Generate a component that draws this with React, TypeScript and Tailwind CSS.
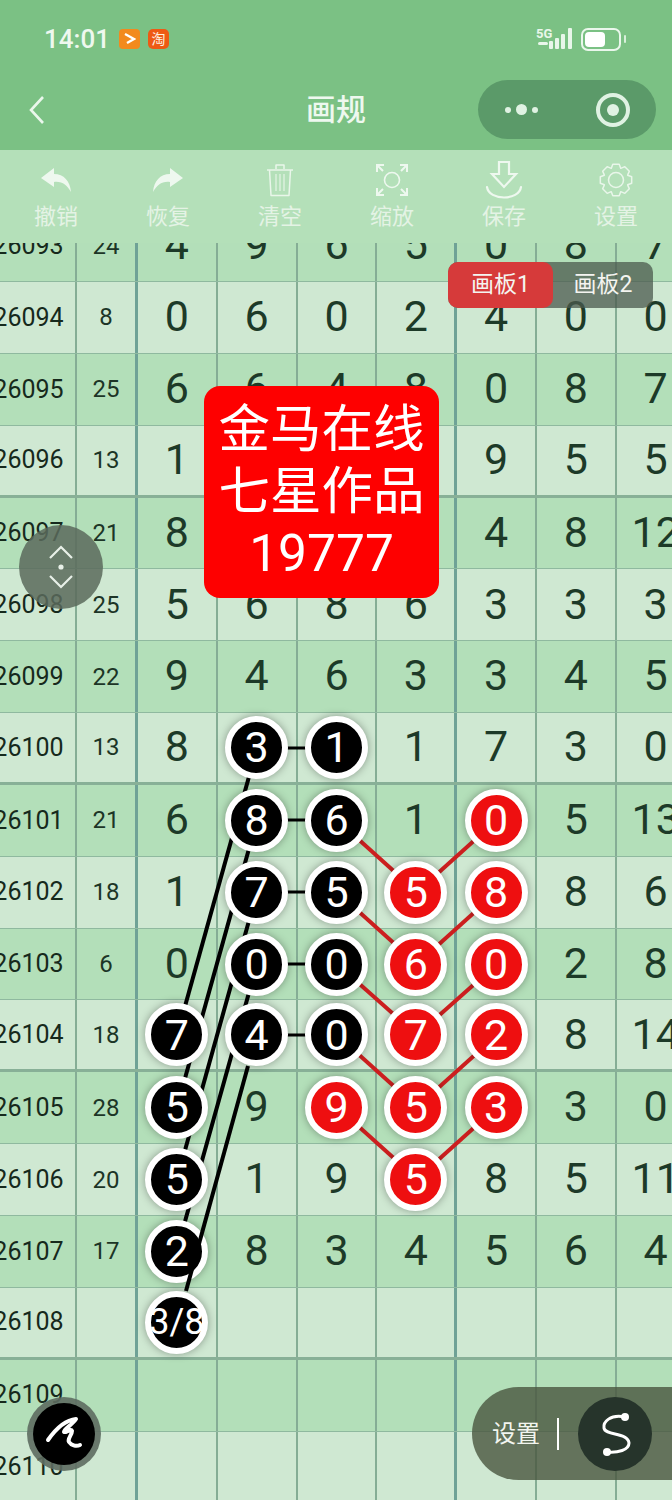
import React from "react";

type Cell = string | { b: string } | { r: string };

const rows: { id: string; n: string; c: Cell[] }[] = [
  { id: "26093", n: "24", c: ["4", "9", "6", "5", "0", "8", "7"] },
  { id: "26094", n: "8", c: ["0", "6", "0", "2", "4", "0", "0"] },
  { id: "26095", n: "25", c: ["6", "6", "4", "8", "0", "8", "7"] },
  { id: "26096", n: "13", c: ["1", "", "", "", "9", "5", "5"] },
  { id: "26097", n: "21", c: ["8", "", "", "", "4", "8", "12"] },
  { id: "26098", n: "25", c: ["5", "6", "8", "6", "3", "3", "3"] },
  { id: "26099", n: "22", c: ["9", "4", "6", "3", "3", "4", "5"] },
  { id: "26100", n: "13", c: ["8", { b: "3" }, { b: "1" }, "1", "7", "3", "0"] },
  { id: "26101", n: "21", c: ["6", { b: "8" }, { b: "6" }, "1", { r: "0" }, "5", "13"] },
  { id: "26102", n: "18", c: ["1", { b: "7" }, { b: "5" }, { r: "5" }, { r: "8" }, "8", "6"] },
  { id: "26103", n: "6", c: ["0", { b: "0" }, { b: "0" }, { r: "6" }, { r: "0" }, "2", "8"] },
  { id: "26104", n: "18", c: [{ b: "7" }, { b: "4" }, { b: "0" }, { r: "7" }, { r: "2" }, "8", "14"] },
  { id: "26105", n: "28", c: [{ b: "5" }, "9", { r: "9" }, { r: "5" }, { r: "3" }, "3", "0"] },
  { id: "26106", n: "20", c: [{ b: "5" }, "1", "9", { r: "5" }, "8", "5", "11"] },
  { id: "26107", n: "17", c: [{ b: "2" }, "8", "3", "4", "5", "6", "4"] },
  { id: "26108", n: "", c: [{ b: "3/8" }, "", "", "", "", "", ""] },
  { id: "26109", n: "", c: ["", "", "", "", "", "", ""] },
  { id: "26110", n: "", c: ["", "", "", "", "", "", ""] },
];

const redPairs = [
  [820, 892],
  [892, 964],
  [964, 1035],
  [1035, 1107],
  [1107, 1179],
];

const blackPairs = [
  [748, 1035],
  [820, 1107],
  [892, 1179],
  [964, 1250],
];

function gearPath() {
  const pts: string[] = [];
  for (let i = 0; i < 8; i++) {
    const a = (i * Math.PI) / 4;
    const spots: [number, number][] = [
      [12.6, a - 0.39],
      [16, a - 0.2],
      [16, a + 0.2],
      [12.6, a + 0.39],
    ];
    for (const [r, t] of spots) {
      pts.push(`${(17 + r * Math.sin(t)).toFixed(2)} ${(17 - r * Math.cos(t)).toFixed(2)}`);
    }
  }
  return `M${pts.join(" L")} Z`;
}

function Dot({ label, red }: { label: string; red?: boolean }) {
  return (
    <div
      className={`relative z-20 flex h-[63px] w-[63px] shrink-0 items-center justify-center overflow-visible rounded-full border-[6px] border-white text-white shadow-[0_0_9px_rgba(0,0,0,0.35)] ${
        red ? "bg-[#ee0f10]" : "bg-black"
      } ${label.length > 1 ? "text-[36px]" : "text-[43px]"}`}
    >
      {label}
    </div>
  );
}

function Tool({ label, children }: { label: string; children: React.ReactNode }) {
  return (
    <div className="flex flex-col items-center">
      <div className="flex h-[38px] items-center justify-center">{children}</div>
      <div className="mt-[3px] text-[22px] leading-[30px] text-[#e4f3e5]">{label}</div>
    </div>
  );
}

export default function App() {
  return (
    <div
      className="relative h-[1500px] w-[672px] overflow-hidden bg-[#cfe8d2]"
      style={{ fontFamily: 'Roboto, "Noto Sans CJK SC", sans-serif' }}
    >
      {/* Header */}
      <div className="h-[150px] bg-[#7bc184]">
        <div className="flex h-[78px] items-center justify-between pl-[44px] pr-[46px]">
          <div className="flex items-center">
            <span className="text-[26px] font-medium leading-none text-[#eef8ef]">14:01</span>
            <span className="ml-[9px] flex h-[20px] w-[21px] items-center justify-center rounded-[4px] bg-[#f28a1e]">
              <svg width="13" height="14" viewBox="0 0 13 14" fill="none" stroke="#fff" strokeWidth="2.4">
                <path d="M2 2 L11 7 L4 11" />
              </svg>
            </span>
            <span className="ml-[8px] flex h-[20px] w-[21px] items-center justify-center rounded-[5px] bg-[#ee5a14] text-[14px] leading-none text-[#fff3e0]">
              淘
            </span>
          </div>
          <div className="flex items-center">
            <svg width="40" height="24" viewBox="0 0 40 24" fill="#e8f6ea">
              <text x="0" y="11" fontSize="13" fontWeight="700" fill="#e8f6ea">5G</text>
              <rect x="2" y="15" width="10" height="3" rx="1.5" />
              <rect x="13" y="14" width="4" height="8" rx="1" />
              <rect x="19" y="11" width="4" height="11" rx="1" />
              <rect x="25" y="7" width="4" height="15" rx="1" />
              <rect x="32" y="1" width="4" height="21" rx="1" />
            </svg>
            <div className="ml-[5px] flex h-[23px] w-[40px] items-center rounded-[7px] border-2 border-[#eaf7ec] p-[2px]">
              <div className="h-full w-[20px] rounded-[4px] bg-white" />
            </div>
            <div className="ml-[3px] h-[8px] w-[2px] rounded-full bg-[#d8efdb]" />
          </div>
        </div>
        <div className="mt-[2px] grid h-[70px] grid-cols-[1fr_auto_1fr] items-start">
          <div className="flex h-[59px] items-center pl-[28px]">
            <svg width="17" height="30" viewBox="0 0 17 30" fill="none" stroke="#eaf7ec" strokeWidth="2.6">
              <path d="M15 2 L3 15 L15 28" />
            </svg>
          </div>
          <div className="flex h-[59px] items-center text-[30px] font-medium text-[#eef8ef]">画规</div>
          <div className="flex justify-end pr-[16px]">
            <div className="flex h-[59px] w-[178px] items-center rounded-full bg-[#5b9a69]">
              <div className="flex flex-1 items-center justify-center gap-[5px]">
                <span className="h-[6px] w-[6px] rounded-full bg-[#e0f2e3]" />
                <span className="h-[11px] w-[11px] rounded-full bg-[#e0f2e3]" />
                <span className="h-[6px] w-[6px] rounded-full bg-[#e0f2e3]" />
              </div>
              <div className="flex flex-1 items-center justify-center pl-[4px]">
                <div className="flex h-[34px] w-[34px] items-center justify-center rounded-full border-[4px] border-[#e0f2e3]">
                  <span className="h-[12px] w-[12px] rounded-full bg-[#e0f2e3]" />
                </div>
              </div>
            </div>
          </div>
        </div>
      </div>

      {/* Toolbar */}
      <div className="grid h-[93px] grid-cols-6 bg-[#b4e0b9] pt-[11px]">
        <Tool label="撤销">
          <svg width="32" height="26" viewBox="0 0 32 26" fill="#eef8ef">
            <path d="M14 1 L1 11 L14 20 V15 C22 14 27 18 31 25 C30 14 24 7 14 7 Z" />
          </svg>
        </Tool>
        <Tool label="恢复">
          <svg width="32" height="26" viewBox="0 0 32 26" fill="#eef8ef">
            <path d="M18 1 L31 11 L18 20 V15 C10 14 5 18 1 25 C2 14 8 7 18 7 Z" />
          </svg>
        </Tool>
        <Tool label="清空">
          <svg width="28" height="34" viewBox="0 0 28 34" fill="none" stroke="#e9f6ea" strokeWidth="1.5" strokeLinejoin="round">
            <path d="M10 6 V2 H18 V6" />
            <path d="M1 7 H27" />
            <path d="M3.5 7 L5 32.5 H23 L24.5 7" />
            <path d="M10 11 V28 M14 11 V28 M18 11 V28" strokeWidth="1.1" />
          </svg>
        </Tool>
        <Tool label="缩放">
          <svg width="34" height="34" viewBox="0 0 34 34" fill="none" stroke="#eef8ef" strokeWidth="2">
            <path d="M2 9 V2 H9 M2 2 L8 8 M25 2 H32 V9 M32 2 L26 8 M2 25 V32 H9 M2 32 L8 26 M25 32 H32 V25 M32 32 L26 26" />
            <circle cx="17" cy="17" r="7.5" strokeWidth="1.6" />
          </svg>
        </Tool>
        <Tool label="保存">
          <svg width="40" height="38" viewBox="0 0 40 38" fill="none" stroke="#eef8ef" strokeWidth="2.2">
            <path d="M15 1 H25 V13 H32 L20 26 L8 13 H15 Z" />
            <path d="M3 26 C5 40 35 40 37 26" strokeLinecap="round" />
          </svg>
        </Tool>
        <Tool label="设置">
          <svg width="34" height="34" viewBox="0 0 34 34" fill="none" stroke="#e9f6ea" strokeWidth="1.5" strokeLinejoin="round">
            <path d={gearPath()} />
            <circle cx="17" cy="17" r="7.5" />
          </svg>
        </Tool>
      </div>

      {/* Table */}
      <div className="relative h-[1257px] overflow-hidden">
        <div className="mt-[-32.85px] ml-[-16px] w-[760px]">
          {rows.map((r, i) => (
            <div
              key={r.id}
              className={`flex h-[71.85px] items-stretch ${i % 2 === 0 ? "bg-[#b3dfb9]" : "bg-[#cfe8d2]"} ${
                i % 4 === 3 ? "border-b-[3px] border-[#88b097]" : "border-b border-[#8fb99f]"
              }`}
            >
              <div className="flex w-[93px] items-center justify-center border-r-2 border-[#85ad95] pr-[2px] text-[25px] text-[#16291c]">
                {r.id}
              </div>
              <div className="flex w-[61px] items-center justify-center border-r-[3px] border-[#6fa296] text-[24px] text-[#1c3526]">
                {r.n}
              </div>
              {r.c.map((c, j) => (
                <div
                  key={j}
                  className={`flex w-[79.8px] items-center justify-center text-[43px] text-[#1d3a28] ${
                    j === 3 ? "border-r-[3px] border-[#6fa296]" : "border-r-2 border-[#85ad95]"
                  }`}
                >
                  {typeof c === "string" ? (
                    <span className="mb-[2px]">{c}</span>
                  ) : "b" in c ? (
                    <Dot label={c.b} />
                  ) : (
                    <Dot label={c.r} red />
                  )}
                </div>
              ))}
            </div>
          ))}
        </div>

        {/* Connectors under the nodes */}
        <svg className="absolute left-0 top-[-243px] z-10" width="672" height="1500" viewBox="0 0 672 1500">
          {blackPairs.map(([a, b]) => (
            <line key={a} x1="257" y1={a} x2="177" y2={b} stroke="#000" strokeWidth="4" />
          ))}
          {[748, 820, 892, 964, 1035].map((y) => (
            <line key={y} x1="285" y1={y} x2="310" y2={y} stroke="#000" strokeWidth="3" />
          ))}
          {redPairs.map(([a, b]) => (
            <g key={a} stroke="#cc1f1f" strokeWidth="4">
              <line x1="337" y1={a} x2="417" y2={b} />
              <line x1="497" y1={a} x2="417" y2={b} />
            </g>
          ))}
        </svg>
        {/* Last stroke runs over the earlier nodes */}
        <svg className="pointer-events-none absolute left-0 top-[-243px] z-30" width="672" height="1500" viewBox="0 0 672 1500">
          <line x1="248" y1="1066" x2="186" y2="1291" stroke="#000" strokeWidth="4" />
        </svg>

        {/* Board tabs */}
        <div className="absolute left-[448px] top-[19px] z-40 flex h-[46px] w-[205px] rounded-[10px] bg-[#4b5a4d]/75 text-[23px] text-[#f4f4f0]">
          <div className="flex w-[105px] items-center justify-center rounded-[10px] bg-[#d63a3a]">画板1</div>
          <div className="flex w-[100px] items-center justify-center">画板2</div>
        </div>

        {/* Watermark */}
        <div className="absolute left-[204px] top-[143px] z-40 flex h-[212px] w-[235px] flex-col items-center justify-center rounded-[16px] bg-[#fe0000] text-[51.5px] leading-[62px] text-white">
          <div>金马在线</div>
          <div>七星作品</div>
          <div>19777</div>
        </div>

        {/* Scroll handle */}
        <div className="absolute left-[19px] top-[282px] z-40 flex h-[84px] w-[84px] items-center justify-center rounded-full bg-[#5a6a5c]/85">
          <svg width="28" height="46" viewBox="0 0 28 46" fill="none" stroke="#e8f0e8" strokeWidth="2.2">
            <path d="M3 14 L14 3 L25 14 M3 32 L14 43 L25 32" />
            <circle cx="14" cy="23" r="2.6" fill="#e8f0e8" stroke="none" />
          </svg>
        </div>

        {/* Pen button */}
        <div className="absolute left-[27px] top-[1154px] z-40 flex h-[74px] w-[74px] items-center justify-center rounded-full bg-[#5d6b60]/90">
          <div className="flex h-[62px] w-[62px] items-center justify-center rounded-full bg-black">
            <svg width="38" height="36" viewBox="0 0 38 36" fill="none" stroke="#fff" strokeWidth="4" strokeLinecap="round" strokeLinejoin="round">
              <path d="M3 24 C10 14 20 4 31 3 C27 9 19 13 19 16 C21 17 26 12 27 15 C27 19 22 23 24 26 C26 29 31 31 35 29" />
            </svg>
          </div>
        </div>

        {/* Settings pill */}
        <div className="absolute left-[472px] top-[1144px] z-40 flex h-[93px] w-[200px] items-center rounded-l-[47px] bg-[#48553f]/80 pl-[20px]">
          <span className="text-[24px] text-[#f2f5ef]">设置</span>
          <span className="ml-[17px] h-[32px] w-[2px] bg-white" />
          <div className="ml-[19px] flex h-[74px] w-[74px] items-center justify-center rounded-full bg-[#26342b]">
            <svg width="34" height="44" viewBox="0 0 34 44" fill="none" stroke="#fff" strokeWidth="3">
              <path d="M27 5 C12 2 5 10 6 16 C7 24 30 20 31 31 C31 38 20 41 9 40" />
              <circle cx="27" cy="5" r="4" fill="#fff" stroke="none" />
              <circle cx="9" cy="40" r="4" fill="#fff" stroke="none" />
            </svg>
          </div>
        </div>
      </div>
    </div>
  );
}
